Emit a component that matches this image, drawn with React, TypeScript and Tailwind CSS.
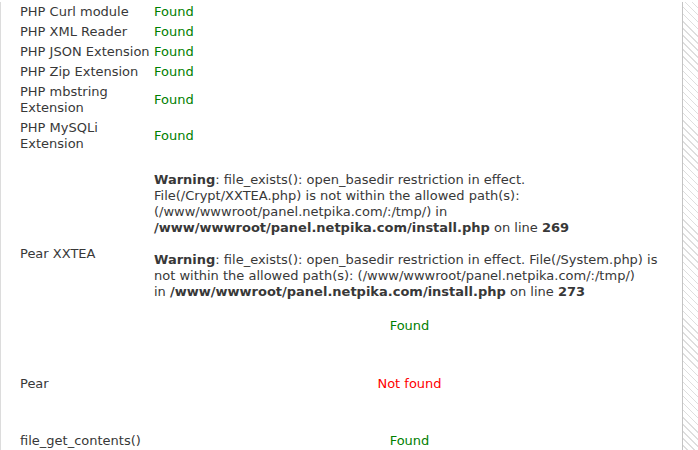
import React from "react";

// Requirement rows for the installer check page
const simpleRows = [
  { label: "PHP Curl module", ok: true },
  { label: "PHP XML Reader", ok: true },
  { label: "PHP JSON Extension", ok: true },
  { label: "PHP Zip Extension", ok: true },
];

function Status({ ok }: { ok: boolean }) {
  return ok ? (
    <span className="text-[#008000]">Found</span>
  ) : (
    <span className="text-[#ff0000]">Not found</span>
  );
}

export default function App() {
  return (
    <div className="min-h-[450px] bg-[repeating-linear-gradient(45deg,#ffffff_0px,#ffffff_4px,#dedede_4px,#dedede_5px)] font-['DejaVu_Sans',sans-serif] text-[13px] leading-4 text-[#383838]">
      <div className="w-[683px] min-h-[450px] bg-white border-l border-r border-l-[#dcdcdc] border-r-[#c4c4c4]">
        <table className="ml-[17px] mt-[2px] border-collapse">
          <colgroup>
            <col className="w-[134px]" />
            <col className="w-[515px]" />
          </colgroup>
          <tbody>
            {simpleRows.map((row) => (
              <tr key={row.label}>
                <td className="p-[2px] align-middle whitespace-nowrap">{row.label}</td>
                <td className="p-[2px] align-middle">
                  <Status ok={row.ok} />
                </td>
              </tr>
            ))}
            <tr>
              <td className="p-[2px] align-middle">
                PHP mbstring
                <br />
                Extension
              </td>
              <td className="p-[2px] align-middle">
                <Status ok />
              </td>
            </tr>
            <tr>
              <td className="p-[2px] align-middle">
                PHP MySQLi
                <br />
                Extension
              </td>
              <td className="p-[2px] align-middle">
                <Status ok />
              </td>
            </tr>
            <tr>
              <td className="p-[2px] align-middle">Pear XXTEA</td>
              <td className="p-[2px] align-middle whitespace-nowrap">
                <br />
                <b>Warning</b>: file_exists(): open_basedir restriction in effect.
                <br />
                File(/Crypt/XXTEA.php) is not within the allowed path(s):
                <br />
                (/www/wwwroot/panel.netpika.com/:/tmp/) in
                <br />
                <b>/www/wwwroot/panel.netpika.com/install.php</b> on line <b>269</b>
                <br />
                <br />
                <b>Warning</b>: file_exists(): open_basedir restriction in effect. File(/System.php) is
                <br />
                not within the allowed path(s): (/www/wwwroot/panel.netpika.com/:/tmp/)
                <br />
                in <b>/www/wwwroot/panel.netpika.com/install.php</b> on line <b>273</b>
                <div className="my-[18px] text-center">
                  <Status ok />
                </div>
              </td>
            </tr>
            <tr className="h-[59px]">
              <td className="p-[2px] align-middle">Pear</td>
              <td className="p-[2px] align-middle text-center">
                <Status ok={false} />
              </td>
            </tr>
            <tr className="h-[56px]">
              <td className="p-[2px] align-middle">file_get_contents()</td>
              <td className="p-[2px] align-middle text-center">
                <Status ok />
              </td>
            </tr>
          </tbody>
        </table>
      </div>
    </div>
  );
}
